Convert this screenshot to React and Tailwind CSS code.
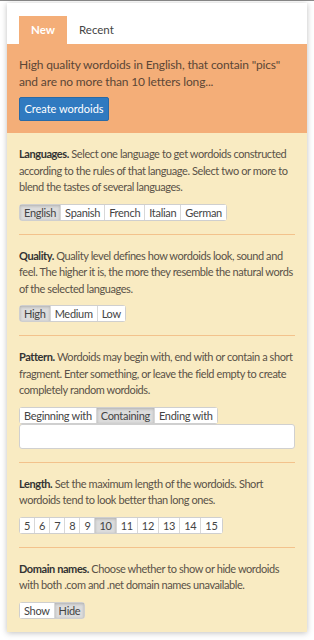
const languages = ["English", "Spanish", "French", "Italian", "German"];
const qualities = ["High", "Medium", "Low"];
const patterns = ["Beginning with", "Containing", "Ending with"];
const lengths = [5, 6, 7, 8, 9, 10, 11, 12, 13, 14, 15];

function Group({ items, active }) {
  return (
    <div className="flex">
      <div className="flex rounded-[3px] border border-[#cfcfcf] bg-white">
        {items.map((it, i) => (
          <button
            key={it}
            className={
              "h-[15px] px-[4px] text-[11px] leading-[15px] tracking-[-0.3px] text-[#444] " +
              (i > 0 ? "border-l border-[#d8d8d8] " : "") +
              (String(it) === String(active)
                ? "bg-[#dcdcdc] shadow-[inset_0_1px_3px_rgba(0,0,0,0.2)]"
                : "bg-white")
            }
          >
            {it}
          </button>
        ))}
      </div>
    </div>
  );
}

function Section({ title, children, last }) {
  return (
    <div className={"pt-[13px] pb-[13px] " + (last ? "" : "border-b border-[#f3c28c]")}>
      <p className="text-[11px] leading-[16.5px] tracking-[-0.42px] text-[#5a5248]">
        <b className="text-[#333]">{title}.</b> {children[0]}
      </p>
      <div className="mt-[8px]">{children[1]}</div>
    </div>
  );
}

export default function App() {
  return (
    <div
      className="min-h-[640px] border-t border-[#8a8a8a] bg-white pt-[2px]"
      style={{ fontFamily: "Lato, 'Open Sans', sans-serif" }}
    >
      <div className="mx-[7px] w-[300px] shadow-[0_1px_6px_rgba(0,0,0,0.25)]">
        <div className="flex bg-white px-[12px] pt-[13px]">
          <div className="flex h-[28px] w-[48px] items-center justify-center bg-[#f4ae78] text-[11.5px] font-bold text-white">
            New
          </div>
          <div className="flex h-[28px] items-center px-[12px] text-[11.5px] text-[#444]">
            Recent
          </div>
        </div>
        <div className="bg-[#f4ae78] px-[12px] pb-[12px] pt-[12px]">
          <p className="text-[12px] leading-[17px] tracking-[-0.15px] text-[#5b4636]">
            High quality wordoids in English, that contain "pics" and are no more than 10 letters long...
          </p>
          <button className="mt-[7px] h-[24px] w-[90px] rounded-[2px] border border-[#2a6aa6] bg-[#307ac0] text-[11px] text-white">
            Create wordoids
          </button>
        </div>
        <div className="bg-[#f9ebc2] px-[12px]">
          <Section title="Languages">
            {"Select one language to get wordoids constructed according to the rules of that language. Select two or more to blend the tastes of several languages."}
            <Group items={languages} active="English" />
          </Section>
          <Section title="Quality">
            {"Quality level defines how wordoids look, sound and feel. The higher it is, the more they resemble the natural words of the selected languages."}
            <Group items={qualities} active="High" />
          </Section>
          <Section title="Pattern">
            {"Wordoids may begin with, end with or contain a short fragment. Enter something, or leave the field empty to create completely random wordoids."}
            <div>
              <Group items={patterns} active="Containing" />
              <input className="block h-[25px] w-full rounded-[3px] border border-[#d0d0d0] bg-white px-2 text-[12px] outline-none" />
            </div>
          </Section>
          <Section title="Length">
            {"Set the maximum length of the wordoids. Short wordoids tend to look better than long ones."}
            <Group items={lengths} active="10" />
          </Section>
          <Section title="Domain names" last>
            {"Choose whether to show or hide wordoids with both .com and .net domain names unavailable."}
            <Group items={["Show", "Hide"]} active="Hide" />
          </Section>
        </div>
      </div>
    </div>
  );
}
